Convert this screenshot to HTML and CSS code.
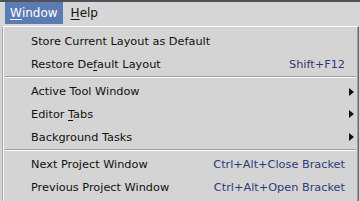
FILE: index.html
```html
<!DOCTYPE html>
<html>
<head>
<meta charset="utf-8">
<link rel="stylesheet" href="styles.css">
</head>
<body>
<div class="topline"></div>
<div class="menubar">
  <div class="mb-item active"><u>W</u>indow</div>
  <div class="mb-item"><u>H</u>elp</div>
</div>
<div class="menu">
  <div class="row"><span class="label">Store Current Layout as Default</span></div>
  <div class="row"><span class="label">Restore De<u>f</u>ault Layout</span><span class="key">Shift+F12</span></div>
  <div class="sep"></div>
  <div class="row"><span class="label">Active Tool Window</span><span class="arrow"></span></div>
  <div class="row"><span class="label">Editor <u>T</u>abs</span><span class="arrow"></span></div>
  <div class="row"><span class="label">Background Tasks</span><span class="arrow"></span></div>
  <div class="sep"></div>
  <div class="row"><span class="label">Next Project Window</span><span class="key">Ctrl+Alt+Close Bracket</span></div>
  <div class="row"><span class="label">Previous Project Window</span><span class="key">Ctrl+Alt+Open Bracket</span></div>
</div>
</body>
</html>
```
FILE: styles.css
```css
html, body {
  margin: 0;
  padding: 0;
  height: 100%;
  overflow: hidden;
}
body {
  background: #d4d4d4;
  font-family: "DejaVu Sans", Verdana, sans-serif;
  font-size: 11.3px;
  color: #111111;
}
.topline {
  height: 2px;
  background: #505258;
}
.menubar {
  display: flex;
  height: 24px;
  padding-left: 5px;
  background: #d6d6d6;
  font-size: 12px;
}
.mb-item {
  display: flex;
  align-items: center;
  height: 22px;
  padding: 0 5px;
}
.mb-item.active {
  background: #5b7bb3;
  color: #ffffff;
  margin-right: 3px;
}
.menu {
  margin-left: 2px;
  margin-right: 1px;
  border-top: 1px solid #ffffff;
  border-left: 1px solid #a8a8a8;
  border-right: 1px solid #6a6a6a;
  box-shadow: inset 1px 0 0 #f4f4f4, inset -1px 0 0 #a0a0a0;
  padding-top: 3px;
  height: 200px;
  background: #d4d4d4;
}
.row {
  display: flex;
  align-items: center;
  height: 22.7px;
  padding-left: 28px;
  padding-right: 13px;
}
.label {
  flex: 1;
}
.key {
  color: #2e3b7a;
}
.arrow {
  width: 0;
  height: 0;
  border-top: 4px solid transparent;
  border-bottom: 4px solid transparent;
  border-left: 5px solid #111111;
  margin-right: -9px;
}
.sep {
  margin: 1px 2px 2px 2px;
  height: 1px;
  background: #a0a0a0;
  border-bottom: 1px solid #ffffff;
}
u {
  text-decoration: underline;
  text-underline-offset: 2px;
}
```
